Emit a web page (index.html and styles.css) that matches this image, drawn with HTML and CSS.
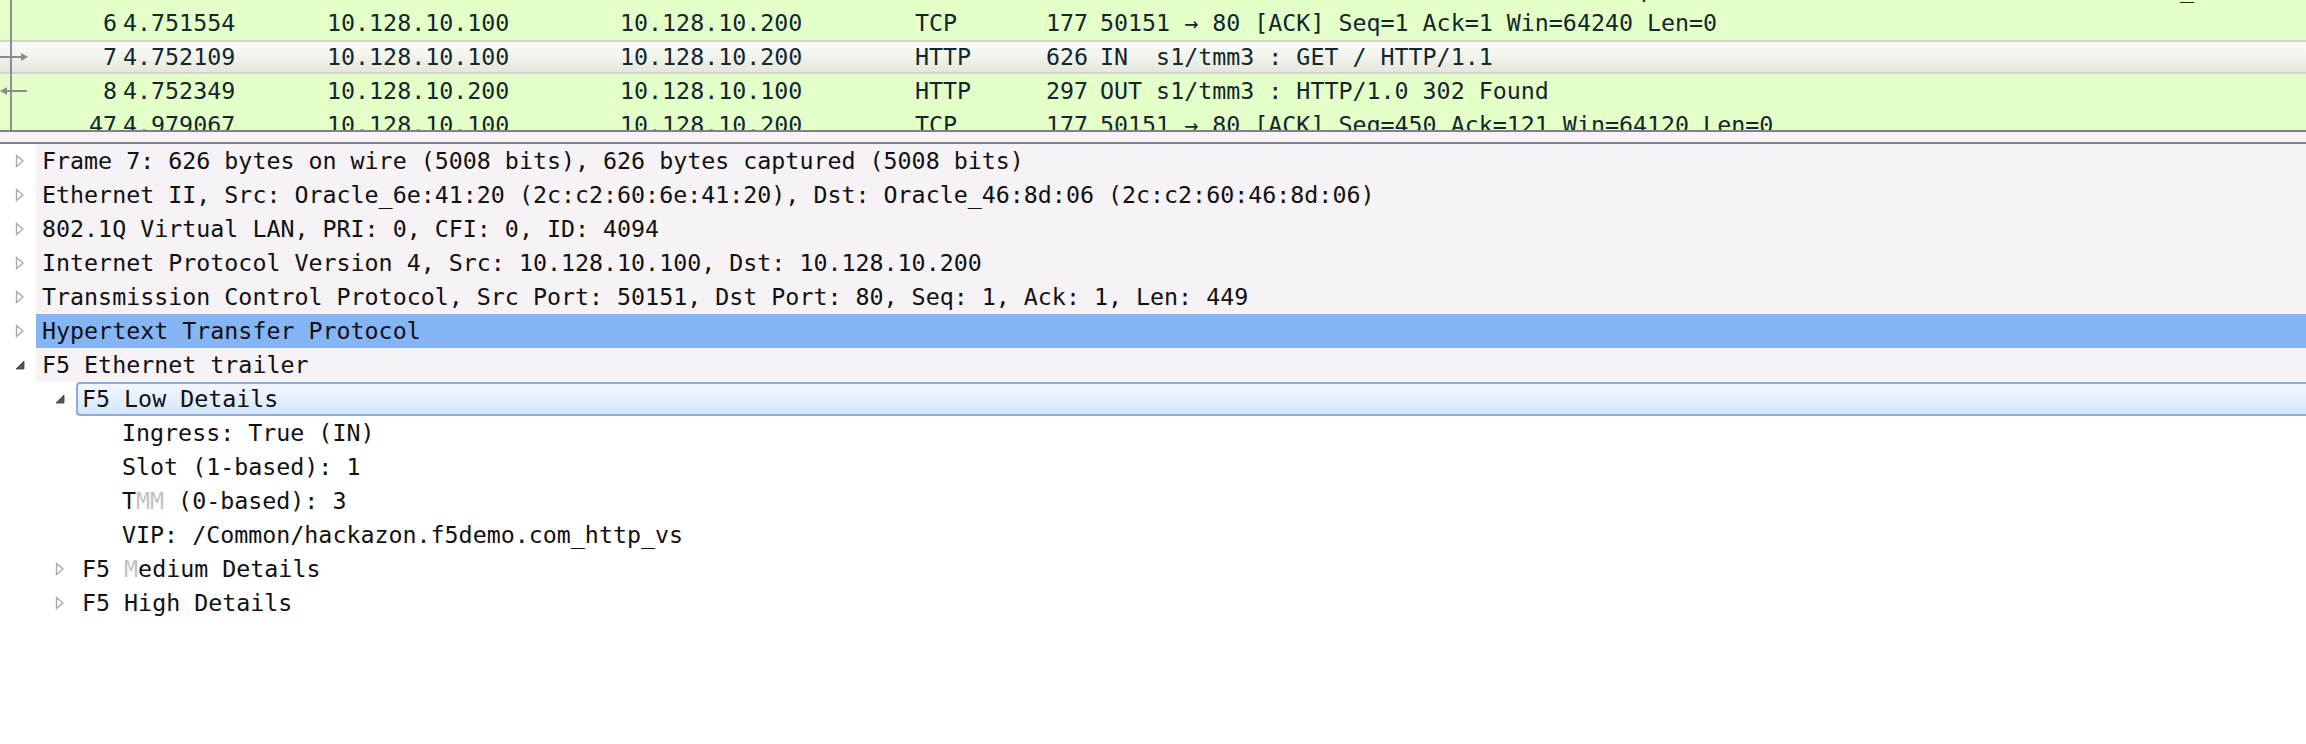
FILE: index.html
```html
<!DOCTYPE html>
<html>
<head>
<meta charset="utf-8">
<link rel="stylesheet" href="styles.css">
</head>
<body>
<div class="plist">
  <div class="plist-scroll">
    <div class="prow">
      <div class="rel"><svg width="30" height="34" viewBox="0 0 30 34"><rect x="10" y="0" width="2" height="34" fill="#8c8c96"/></svg></div>
      <div class="c-no">5</div><div class="c-time">4.751389</div><div class="c-src">10.128.10.200</div><div class="c-dst">10.128.10.100</div><div class="c-proto">TCP</div><div class="c-len">78</div><div class="c-info">OUT s1/tmm3 : 80 → 50151 [SYN, ACK] Seq=0 Ack=1 Win=64240 Len=0 MSS=1460 SACK_PERM WS=128</div>
    </div>
    <div class="prow">
      <div class="rel"><svg width="30" height="34" viewBox="0 0 30 34"><rect x="10" y="0" width="2" height="34" fill="#8c8c96"/></svg></div>
      <div class="c-no">6</div><div class="c-time">4.751554</div><div class="c-src">10.128.10.100</div><div class="c-dst">10.128.10.200</div><div class="c-proto">TCP</div><div class="c-len">177</div><div class="c-info">50151 → 80 [ACK] Seq=1 Ack=1 Win=64240 Len=0</div>
    </div>
    <div class="prow sel">
      <div class="rel"><svg width="30" height="34" viewBox="0 0 30 34"><rect x="10" y="0" width="2" height="34" fill="#8c8c96"/><rect x="0" y="16" width="22" height="2" fill="#8c8c8c"/><path d="M21 13 L28 17 L21 21 Z" fill="#8c8c8c"/></svg></div>
      <div class="c-no">7</div><div class="c-time">4.752109</div><div class="c-src">10.128.10.100</div><div class="c-dst">10.128.10.200</div><div class="c-proto">HTTP</div><div class="c-len">626</div><div class="c-info">IN  s1/tmm3 : GET / HTTP/1.1</div>
    </div>
    <div class="prow">
      <div class="rel"><svg width="30" height="34" viewBox="0 0 30 34"><rect x="10" y="0" width="2" height="34" fill="#8c8c96"/><rect x="5" y="16" width="22" height="2" fill="#8c8c8c"/><path d="M7 13 L0 17 L7 21 Z" fill="#8c8c8c"/></svg></div>
      <div class="c-no">8</div><div class="c-time">4.752349</div><div class="c-src">10.128.10.200</div><div class="c-dst">10.128.10.100</div><div class="c-proto">HTTP</div><div class="c-len">297</div><div class="c-info">OUT s1/tmm3 : HTTP/1.0 302 Found</div>
    </div>
    <div class="prow">
      <div class="rel"><svg width="30" height="34" viewBox="0 0 30 34"><rect x="10" y="0" width="2" height="34" fill="#8c8c96"/></svg></div>
      <div class="c-no">47</div><div class="c-time">4.979067</div><div class="c-src">10.128.10.100</div><div class="c-dst">10.128.10.200</div><div class="c-proto">TCP</div><div class="c-len">177</div><div class="c-info">50151 → 80 [ACK] Seq=450 Ack=121 Win=64120 Len=0</div>
    </div>
  </div>
</div>
<div class="sash"></div>
<div class="tree">
  <div class="trow">
    <div class="exp"><svg width="10" height="14" viewBox="0 0 10 14"><path d="M1.5 1.5 L8 7 L1.5 12.5 Z" fill="#fff" stroke="#a8a8a8" stroke-width="1.3"/></svg></div>
    <div class="label shade">Frame 7: 626 bytes on wire (5008 bits), 626 bytes captured (5008 bits)</div>
  </div>
  <div class="trow">
    <div class="exp"><svg width="10" height="14" viewBox="0 0 10 14"><path d="M1.5 1.5 L8 7 L1.5 12.5 Z" fill="#fff" stroke="#a8a8a8" stroke-width="1.3"/></svg></div>
    <div class="label shade">Ethernet II, Src: Oracle_6e:41:20 (2c:c2:60:6e:41:20), Dst: Oracle_46:8d:06 (2c:c2:60:46:8d:06)</div>
  </div>
  <div class="trow">
    <div class="exp"><svg width="10" height="14" viewBox="0 0 10 14"><path d="M1.5 1.5 L8 7 L1.5 12.5 Z" fill="#fff" stroke="#a8a8a8" stroke-width="1.3"/></svg></div>
    <div class="label shade">802.1Q Virtual LAN, PRI: 0, CFI: 0, ID: 4094</div>
  </div>
  <div class="trow">
    <div class="exp"><svg width="10" height="14" viewBox="0 0 10 14"><path d="M1.5 1.5 L8 7 L1.5 12.5 Z" fill="#fff" stroke="#a8a8a8" stroke-width="1.3"/></svg></div>
    <div class="label shade">Internet Protocol Version 4, Src: 10.128.10.100, Dst: 10.128.10.200</div>
  </div>
  <div class="trow">
    <div class="exp"><svg width="10" height="14" viewBox="0 0 10 14"><path d="M1.5 1.5 L8 7 L1.5 12.5 Z" fill="#fff" stroke="#a8a8a8" stroke-width="1.3"/></svg></div>
    <div class="label shade">Transmission Control Protocol, Src Port: 50151, Dst Port: 80, Seq: 1, Ack: 1, Len: 449</div>
  </div>
  <div class="trow">
    <div class="exp"><svg width="10" height="14" viewBox="0 0 10 14"><path d="M1.5 1.5 L8 7 L1.5 12.5 Z" fill="#fff" stroke="#a8a8a8" stroke-width="1.3"/></svg></div>
    <div class="label selected">Hypertext Transfer Protocol</div>
  </div>
  <div class="trow">
    <div class="exp"><svg width="10" height="10" viewBox="0 0 10 10"><path d="M9 1 L9 9 L1 9 Z" fill="#575757" stroke="#3a3a3a" stroke-width="0.8"/></svg></div>
    <div class="label shade">F5 Ethernet trailer</div>
  </div>
  <div class="trow lvl1">
    <div class="exp"><svg width="10" height="10" viewBox="0 0 10 10"><path d="M9 1 L9 9 L1 9 Z" fill="#575757" stroke="#3a3a3a" stroke-width="0.8"/></svg></div>
    <div class="label focus">F5 Low Details</div>
  </div>
  <div class="trow lvl2"><div class="exp"></div><div class="label">Ingress: True (IN)</div></div>
  <div class="trow lvl2"><div class="exp"></div><div class="label">Slot (1-based): 1</div></div>
  <div class="trow lvl2"><div class="exp"></div><div class="label">T<span class="faint">MM</span> (0-based): 3</div></div>
  <div class="trow lvl2"><div class="exp"></div><div class="label">VIP: /Common/hackazon.f5demo.com_http_vs</div></div>
  <div class="trow lvl1">
    <div class="exp"><svg width="10" height="14" viewBox="0 0 10 14"><path d="M1.5 1.5 L8 7 L1.5 12.5 Z" fill="#fff" stroke="#a8a8a8" stroke-width="1.3"/></svg></div>
    <div class="label">F5 <span class="faint">M</span>edium Details</div>
  </div>
  <div class="trow lvl1">
    <div class="exp"><svg width="10" height="14" viewBox="0 0 10 14"><path d="M1.5 1.5 L8 7 L1.5 12.5 Z" fill="#fff" stroke="#a8a8a8" stroke-width="1.3"/></svg></div>
    <div class="label">F5 High Details</div>
  </div>
</div>
</body>
</html>
```

FILE: styles.css
```css
html, body {
  margin: 0;
  padding: 0;
}
body {
  width: 2306px;
  height: 744px;
  overflow: hidden;
  background: #ffffff;
  font-family: "DejaVu Sans Mono", "Liberation Mono", monospace;
  font-size: 23.3px;
}

/* packet list */
.plist {
  height: 130px;
  overflow: hidden;
  background: #e4ffc7;
  color: #12272e;
}
.plist-scroll {
  margin-top: -28px;
}
.prow {
  display: grid;
  grid-template-columns: 30px 87px 200px 293px 295px 105px 78px 1fr;
  height: 34px;
  line-height: 34px;
  white-space: pre;
}
.prow.sel {
  background: linear-gradient(#fbfcf8 0%, #f1f3ec 50%, #e3e5da 100%);
  box-shadow: inset 0 2px 0 #d2d4c9, inset 0 -2px 0 #d2d4c9;
}
.rel svg {
  display: block;
}
.c-no {
  text-align: right;
}
.c-time {
  padding-left: 6px;
}
.c-src,
.c-dst,
.c-proto {
  padding-left: 10px;
}
.c-len {
  text-align: right;
}
.c-info {
  padding-left: 12px;
}

/* splitter */
.sash {
  height: 10px;
  background: #f6f2f6;
  border-top: 2px solid #7f808f;
  border-bottom: 2px solid #7f808f;
}

/* details tree */
.tree {
  color: #111111;
}
.trow {
  display: flex;
  height: 34px;
  align-items: stretch;
}
.exp {
  width: 36px;
  padding-left: 4px;
  box-sizing: border-box;
  display: flex;
  align-items: center;
  justify-content: center;
  flex: none;
}
.exp svg {
  display: block;
}
.lvl1 .exp {
  margin-left: 40px;
}
.lvl2 .exp {
  margin-left: 80px;
}
.label {
  flex: 1;
  line-height: 34px;
  padding-left: 6px;
  white-space: pre;
}
.label.shade {
  background: #f6f2f6;
}
.label.selected {
  background: #85b5f5;
}
.label.focus {
  border: 2px solid #8aaee0;
  border-right: none;
  border-radius: 4px 0 0 4px;
  background: linear-gradient(#f1f7ff 0%, #e6f0fe 45%, #d5e5fc 100%);
  line-height: 30px;
  padding-left: 4px;
}
.faint {
  color: #c2c2c2;
}
```
